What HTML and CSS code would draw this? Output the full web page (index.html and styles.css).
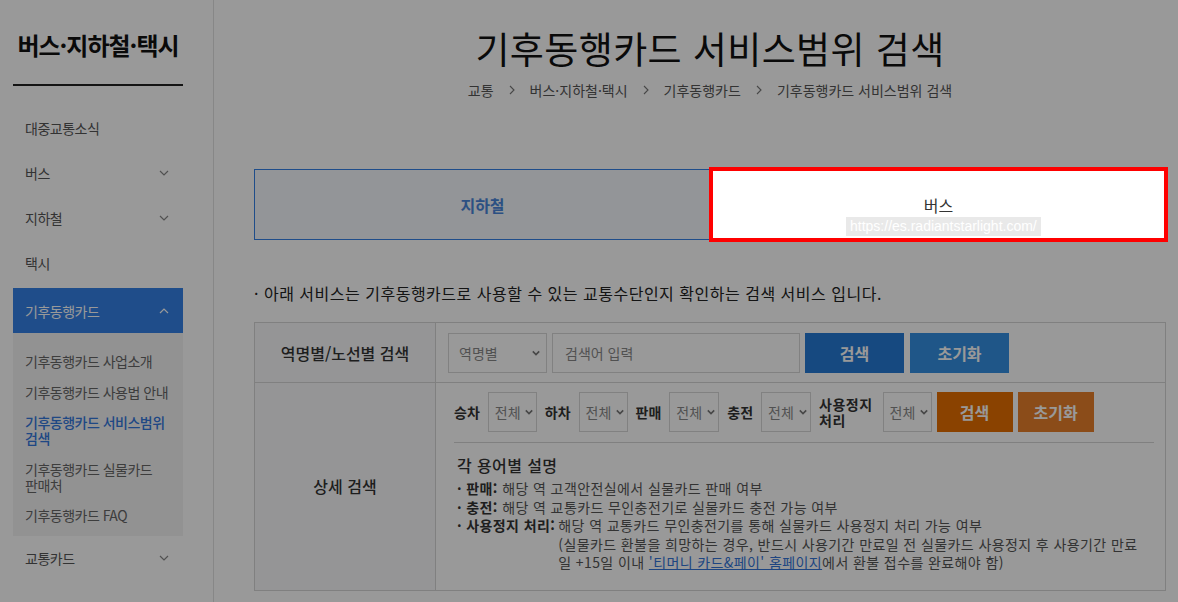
FILE: index.html
```html
<!DOCTYPE html>
<html lang="ko">
<head>
    <meta charset="UTF-8">
    <meta name="viewport" content="width=device-width, initial-scale=1.0">
    <title>기후동행카드 서비스범위 검색</title>
    <link rel="stylesheet" href="styles.css">
</head>
<body>

    <aside class="side">
        <h2 class="side-title">버스·지하철·택시</h2>
        <ul class="menu">
            <li class="menu-item">대중교통소식</li>
            <li class="menu-item">버스 <svg class="chev" viewBox="0 0 10 6"><path d="M1 1l4 4 4-4"/></svg></li>
            <li class="menu-item">지하철 <svg class="chev" viewBox="0 0 10 6"><path d="M1 1l4 4 4-4"/></svg></li>
            <li class="menu-item">택시</li>
            <li class="menu-item active">기후동행카드 <svg class="chev" viewBox="0 0 10 6"><path d="M1 5l4-4 4 4"/></svg></li>
            <li class="submenu">
                <a>기후동행카드 사업소개</a>
                <a>기후동행카드 사용법 안내</a>
                <a class="on">기후동행카드 서비스범위 검색</a>
                <a>기후동행카드 실물카드 판매처</a>
                <a>기후동행카드 FAQ</a>
            </li>
            <li class="menu-item">교통카드 <svg class="chev" viewBox="0 0 10 6"><path d="M1 1l4 4 4-4"/></svg></li>
        </ul>
    </aside>

    <main class="main">
        <div class="content">
            <h1 class="page-title">기후동행카드 서비스범위 검색</h1>
            <div class="crumbs">
                <span>교통</span>
                <svg class="sep" viewBox="0 0 6 10"><path d="M1 1l4 4-4 4"/></svg>
                <span>버스·지하철·택시</span>
                <svg class="sep" viewBox="0 0 6 10"><path d="M1 1l4 4-4 4"/></svg>
                <span>기후동행카드</span>
                <svg class="sep" viewBox="0 0 6 10"><path d="M1 1l4 4-4 4"/></svg>
                <span>기후동행카드 서비스범위 검색</span>
            </div>

            <div class="tabs">
                <div class="tab selected">지하철</div>
                <div class="tab focus">
                    버스
                    <span class="url-tag">https://es.radiantstarlight.com/</span>
                </div>
            </div>

            <p class="notice">· 아래 서비스는 기후동행카드로 사용할 수 있는 교통수단인지 확인하는 검색 서비스 입니다.</p>

            <div class="search-table">
                <div class="row">
                    <div class="th">역명별/노선별 검색</div>
                    <div class="td quick">
                        <div class="select wide"><span>역명별</span><svg viewBox="0 0 10 6"><path d="M1 1l4 4 4-4"/></svg></div>
                        <input class="keyword" type="text" placeholder="검색어 입력">
                        <button class="btn blue">검색</button>
                        <button class="btn blue light">초기화</button>
                    </div>
                </div>
                <div class="row">
                    <div class="th">상세 검색</div>
                    <div class="td detail">
                        <div class="filters">
                            <span class="flabel">승차</span>
                            <div class="select"><span>전체</span><svg viewBox="0 0 10 6"><path d="M1 1l4 4 4-4"/></svg></div>
                            <span class="flabel">하차</span>
                            <div class="select"><span>전체</span><svg viewBox="0 0 10 6"><path d="M1 1l4 4 4-4"/></svg></div>
                            <span class="flabel">판매</span>
                            <div class="select"><span>전체</span><svg viewBox="0 0 10 6"><path d="M1 1l4 4 4-4"/></svg></div>
                            <span class="flabel">충전</span>
                            <div class="select"><span>전체</span><svg viewBox="0 0 10 6"><path d="M1 1l4 4 4-4"/></svg></div>
                            <span class="flabel two">사용정지<br>처리</span>
                            <div class="select"><span>전체</span><svg viewBox="0 0 10 6"><path d="M1 1l4 4 4-4"/></svg></div>
                            <button class="btn orange">검색</button>
                            <button class="btn orange light">초기화</button>
                        </div>

                        <div class="desc">
                            <h4>각 용어별 설명</h4>
                            <p><b>· 판매:</b> 해당 역 고객안전실에서 실물카드 판매 여부</p>
                            <p><b>· 충전:</b> 해당 역 교통카드 무인충전기로 실물카드 충전 가능 여부</p>
                            <div class="desc-item">
                                <b>· 사용정지 처리:</b>
                                <div>
                                    해당 역 교통카드 무인충전기를 통해 실물카드 사용정지 처리 가능 여부<br>
                                    (실물카드 환불을 희망하는 경우, 반드시 사용기간 만료일 전 실물카드 사용정지 후 사용기간 만료<br>
                                    일 +15일 이내 <a class="link">'티머니 카드&amp;페이' 홈페이지</a>에서 환불 접수를 완료해야 함)
                                </div>
                            </div>
                        </div>
                    </div>
                </div>
            </div>
        </div>
    </main>

    <!-- dimmed layer, the focused tab sits above it -->
    <div class="dim"></div>

</body>
</html>
```

FILE: styles.css
```css
* {
    box-sizing: border-box;
}

body {
    font-family: "Noto Sans CJK KR", "Noto Sans", sans-serif;
    background-color: #fff;
    color: #333;
    margin: 0;
    padding: 0;
    display: flex;
    min-height: 100vh;
    overflow: hidden;
}

/* sidebar */
.side {
    width: 214px;
    flex-shrink: 0;
    border-right: 1px solid #e2e2e2;
    padding: 0 30px 0 13px;
}

.side-title {
    margin: 0;
    padding: 26px 0 20px;
    text-align: center;
    font-size: 24px;
    line-height: 38px;
    font-weight: 700;
    color: #111;
    letter-spacing: -1px;
    border-bottom: 2px solid #222;
}

.menu {
    list-style: none;
    margin: 19px 0 0;
    padding: 0;
}

.menu-item {
    height: 45px;
    padding: 0 12px;
    display: flex;
    align-items: center;
    justify-content: space-between;
    font-size: 14px;
    color: #555;
    letter-spacing: -0.5px;
}

.menu-item .chev {
    width: 10px;
    height: 6px;
    fill: none;
    stroke: #888;
    stroke-width: 1.2;
    margin-right: 2px;
}

.menu-item.active {
    margin-top: 3px;
    background-color: #3480e6;
    color: #fff;
}

.menu-item.active .chev {
    stroke: #fff;
}

.submenu {
    background-color: #f4f4f4;
    padding: 13px 12px 5px;
}

.submenu a {
    display: block;
    padding: 7px 0 7.5px;
    font-size: 14px;
    line-height: 16px;
    color: #666;
    letter-spacing: -0.5px;
    word-break: keep-all;
}

.submenu a.on {
    color: #3478dc;
    font-weight: 500;
}

/* main */
.main {
    flex: 1;
}

.content {
    width: 912px;
    margin-left: 40px;
}

.page-title {
    margin: 0;
    padding-top: 22px;
    text-align: center;
    font-size: 37px;
    line-height: 52px;
    font-weight: 400;
    color: #111;
    letter-spacing: 0.4px;
}

.crumbs {
    display: flex;
    justify-content: center;
    align-items: center;
    gap: 15px;
    margin-top: 6px;
    font-size: 14px;
    line-height: 20px;
    color: #555;
}

.crumbs .sep {
    width: 6px;
    height: 10px;
    fill: none;
    stroke: #777;
    stroke-width: 1.1;
}

.tabs {
    display: flex;
    margin-top: 69px;
}

.tab {
    flex: 1;
    height: 71px;
    display: flex;
    align-items: center;
    justify-content: center;
    font-size: 16px;
    color: #333;
}

.tab.selected {
    background-color: #f5f8fd;
    border: 1px solid #3480e6;
    color: #4a86da;
    font-weight: 700;
}

.tab.focus {
    position: relative;
    z-index: 20;
    background-color: #fff;
    outline: 4px solid #ff0000;
    outline-offset: -2px;
}

.url-tag {
    position: absolute;
    left: 135px;
    bottom: 4px;
    padding: 0 4px;
    background-color: #e9e9e9;
    color: #fff;
    font-family: "Liberation Sans", Arial, sans-serif;
    font-size: 14px;
    line-height: 19px;
}

.notice {
    margin: 42px 0 18px;
    font-size: 16px;
    line-height: 22px;
    color: #222;
    letter-spacing: 0.5px;
}

/* search table */
.search-table {
    border: 1px solid #d6d6d6;
}

.row {
    display: flex;
}

.row + .row {
    border-top: 1px solid #d6d6d6;
}

.th {
    width: 181px;
    flex-shrink: 0;
    display: flex;
    align-items: center;
    justify-content: center;
    background-color: #f8f9fb;
    border-right: 1px solid #d6d6d6;
    font-size: 16px;
    font-weight: 500;
    color: #333;
}

.td {
    flex: 1;
}

.td.quick {
    display: flex;
    gap: 5px;
    padding: 10px 12px 9px;
}

.select {
    width: 49px;
    height: 40px;
    border: 1px solid #d8d8d8;
    background-color: #fff;
    display: flex;
    align-items: center;
    justify-content: space-between;
    padding: 0 3px 0 6px;
    font-size: 14px;
    color: #888;
}

.select.wide {
    width: 99px;
    padding: 0 6px 0 10px;
}

.select svg {
    width: 8px;
    height: 6px;
    fill: none;
    stroke: #777;
    stroke-width: 2;
}

.keyword {
    width: 248px;
    height: 40px;
    border: 1px solid #d8d8d8;
    padding: 0 12px;
    font-family: inherit;
    font-size: 14px;
}

.keyword::placeholder {
    color: #888;
}

.btn {
    width: 99px;
    height: 40px;
    border: none;
    color: #fff;
    font-family: inherit;
    font-size: 16px;
    font-weight: 700;
    cursor: pointer;
}

.btn.blue {
    background-color: #257bd5;
}

.btn.blue.light {
    margin-left: 1px;
    background-color: #348fe3;
}

.td.detail {
    padding: 9px 11px 18px 18px;
}

.filters {
    display: flex;
    align-items: center;
    padding-bottom: 10px;
    border-bottom: 1px solid #d6d6d6;
}

.flabel {
    font-size: 14px;
    font-weight: 700;
    color: #333;
    margin: 0 8px 0 0;
}

.select + .flabel {
    margin-left: 8px;
}

.flabel.two {
    line-height: 16px;
    margin-right: 10px;
    letter-spacing: 0.5px;
}

.filters .select:nth-of-type(3),
.filters .select:nth-of-type(4) {
    width: 50px;
}

.btn.orange {
    width: 76px;
    margin-left: 5px;
    background-color: #e66e00;
}

.btn.orange.light {
    background-color: #e87f2b;
}

.desc {
    padding-top: 11px;
    padding-left: 3px;
    font-size: 14px;
    line-height: 18.6px;
    color: #555;
    letter-spacing: 0.4px;
}

.desc h4 {
    margin: 0 0 3px;
    font-size: 16px;
    line-height: 22px;
    font-weight: 500;
    color: #333;
}

.desc p {
    margin: 0;
}

.desc b {
    color: #333;
    font-weight: 700;
}

.desc-item {
    display: flex;
    gap: 3px;
}

.link {
    color: #3274d8;
    text-decoration: underline;
}

.dim {
    position: fixed;
    inset: 0;
    z-index: 10;
    background-color: rgba(0, 0, 0, 0.4);
}
```
